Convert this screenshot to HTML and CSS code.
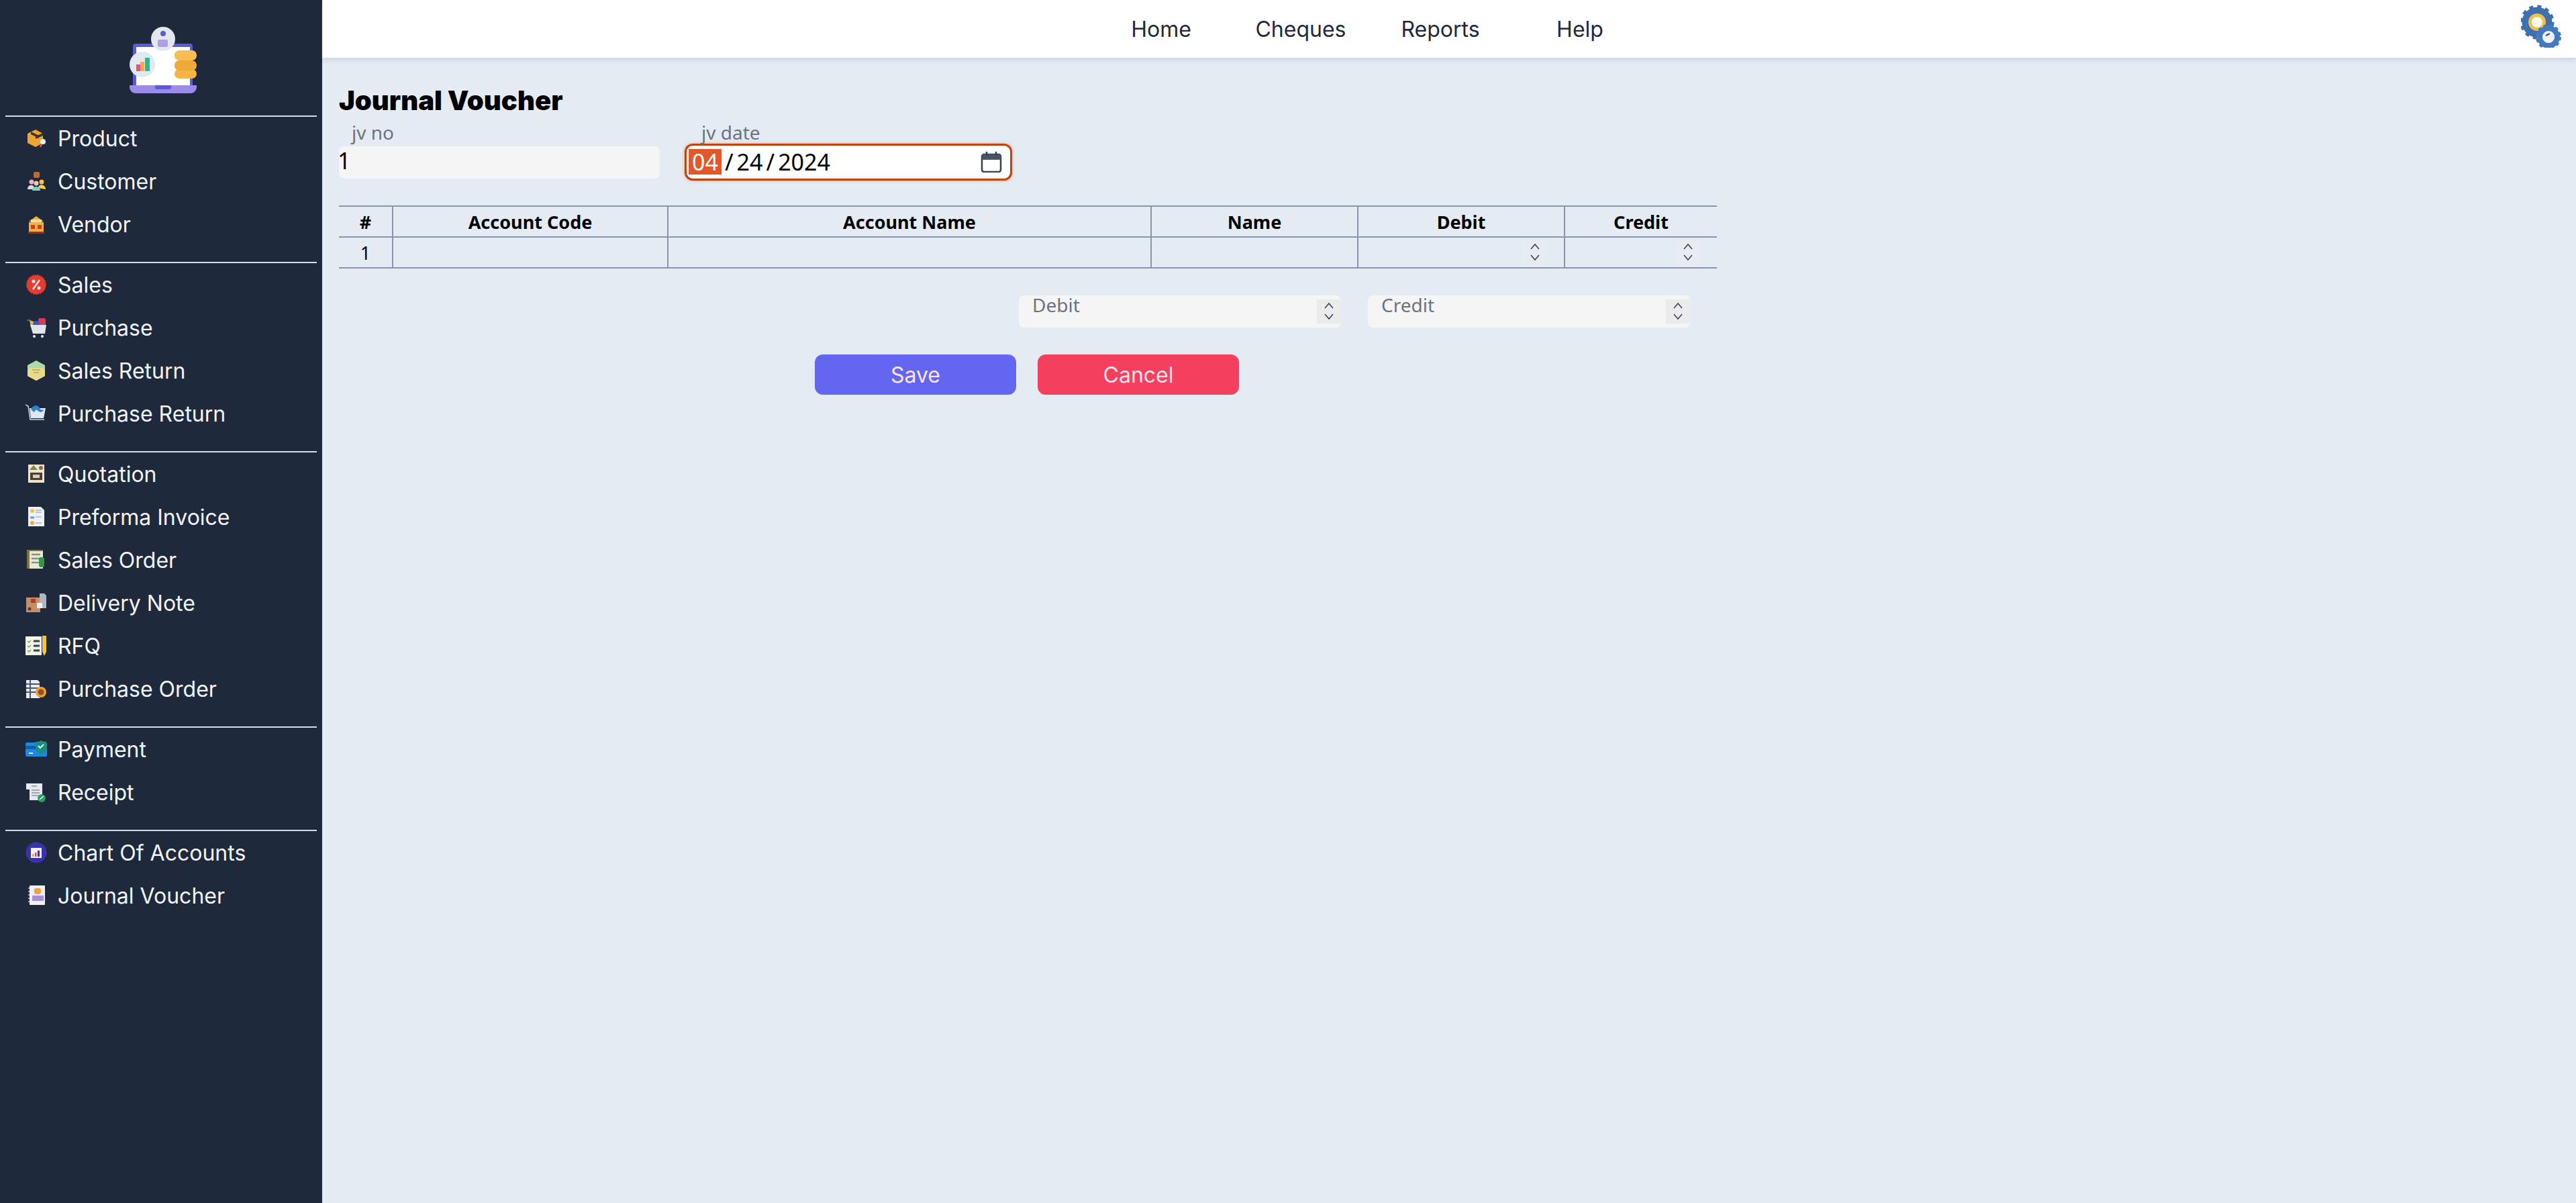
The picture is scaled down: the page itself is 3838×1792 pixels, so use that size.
FILE: index.html
```html
<!DOCTYPE html>
<html lang="en">
<head>
    <meta charset="UTF-8">
    <title>Journal Voucher</title>
    <link rel="stylesheet" href="styles.css">
</head>
<body>
    <aside class="sidebar">
        <div class="logo">
            <svg width="110" height="110" viewBox="190 35 110 110">
                <rect x="199" y="65" width="89" height="66" rx="4" fill="#5b5bd6"/>
                <rect x="204" y="70" width="80" height="58" fill="#fff"/>
                <path d="M194 127h100v3a9 9 0 0 1-9 9h-82a9 9 0 0 1-9-9z" fill="#9b8cec"/>
                <path d="M232 127h24v3a3 3 0 0 1-3 3h-18a3 3 0 0 1-3-3z" fill="#5b5bd6"/>
                <circle cx="244" cy="58" r="18" fill="#e2e8f0"/>
                <circle cx="244" cy="50" r="4" fill="#5b5bd6"/>
                <rect x="236" y="59" width="15" height="11" rx="2" fill="#ae9fe8"/>
                <circle cx="213" cy="96" r="19" fill="#e2e8f0"/>
                <rect x="204" y="96" width="6" height="10" fill="#ec4d84"/>
                <rect x="210" y="92" width="6" height="14" fill="#f6a94a"/>
                <rect x="217" y="86" width="7" height="20" fill="#2fb494"/>
                <rect x="261" y="103" width="33" height="14" rx="7" fill="#f5b544"/>
                <rect x="261" y="90" width="33" height="15" rx="7" fill="#efa93a"/>
                <rect x="261" y="75" width="33" height="15" rx="7" fill="#f8bd50"/>
            </svg>
        </div>

        <nav class="nav-group">
            <a class="nav-item" href="#">
                <svg class="ico" viewBox="0 0 32 32"><path d="M3 9l12-6 11 6v14l-11 6-12-6z" fill="#eda431"/><path d="M8 6l12 6v4l-12-6z M15 13l11-5v4l-11 5z" fill="#3b3436"/><circle cx="26" cy="21" r="4" fill="#e9eef5"/><path d="M24 25l-2 4" stroke="#e85fa0" stroke-width="2"/></svg>
                <span>Product</span>
            </a>
            <a class="nav-item" href="#">
                <svg class="ico" viewBox="0 0 32 32"><rect x="12" y="2" width="9" height="9" rx="2" fill="#b56d3f"/><circle cx="9" cy="17" r="3.5" fill="#f2b6b0"/><circle cx="24" cy="17" r="3.5" fill="#f2c14e"/><circle cx="16" cy="19" r="3.5" fill="#f6c6b4"/><path d="M3 28c0-8 10-8 10-2v2z" fill="#d5dcf2"/><path d="M19 26c0-7 11-6 11 2z" fill="#f5d04e"/><path d="M10 30c0-8 12-8 12 0z" fill="#7fd2b2"/></svg>
                <span>Customer</span>
            </a>
            <a class="nav-item" href="#">
                <svg class="ico" viewBox="0 0 32 32"><path d="M5 12L16 4l11 8z" fill="#f3ae46"/><rect x="8" y="9" width="16" height="4" fill="#f8d9a8"/><rect x="5" y="13" width="22" height="15" fill="#f5b03f"/><rect x="8" y="17" width="6" height="6" fill="#c9412b"/><rect x="18" y="17" width="6" height="6" fill="#c9412b"/><rect x="4" y="27" width="24" height="3" fill="#a52a23"/></svg>
                <span>Vendor</span>
            </a>
        </nav>

        <nav class="nav-group">
            <a class="nav-item" href="#">
                <svg class="ico" viewBox="0 0 32 32"><circle cx="16" cy="16" r="14" fill="#e53b30" stroke="#e53b30" stroke-width="2" stroke-dasharray="2 1.5"/><circle cx="12" cy="11" r="2.5" fill="#fdeaea"/><circle cx="20" cy="21" r="2.5" fill="#fdeaea"/><path d="M21 9L11 23" stroke="#fdeaea" stroke-width="2.5"/></svg>
                <span>Sales</span>
            </a>
            <a class="nav-item" href="#">
                <svg class="ico" viewBox="0 0 32 32"><path d="M2 5h6" stroke="#64748b" stroke-width="1.5"/><path d="M6 5l9 3v7H8z" fill="#f4b23f"/><rect x="19" y="2" width="11" height="12" rx="2" fill="#d93a56"/><circle cx="16" cy="11" r="5" fill="#3a55c8"/><path d="M7 12h24l-2 13H11z" fill="#dfe4ee"/><circle cx="13" cy="29" r="2" fill="#e8edf5"/><circle cx="25" cy="29" r="2" fill="#e8edf5"/></svg>
                <span>Purchase</span>
            </a>
            <a class="nav-item" href="#">
                <svg class="ico" viewBox="0 0 32 32"><path d="M16 1l13 7v16l-13 7-13-7V8z" fill="#a8dcae"/><path d="M7 12h18l4 4v8l-13 7-13-7v-8z" fill="#eadb8b"/><path d="M10 15h12M12 19h8" stroke="#b7a755" stroke-width="1.5"/></svg>
                <span>Sales Return</span>
            </a>
            <a class="nav-item" href="#">
                <svg class="ico" viewBox="0 0 32 32"><path d="M0 3l4 2 3 20h21" fill="none" stroke="#cbd5e1" stroke-width="1.5"/><path d="M6 8h24l-3 15H8z" fill="#dbeaf5"/><path d="M8 10c3-8 12-8 14 0l6 1-5 3c-5-1-8-6-8-3l-2 3z" fill="#2f7fd6"/></svg>
                <span>Purchase Return</span>
            </a>
        </nav>

        <nav class="nav-group">
            <a class="nav-item" href="#">
                <svg class="ico" viewBox="0 0 32 32"><rect x="4" y="2" width="24" height="27" fill="#f1e4cd"/><path d="M6 10l6-7 6 7z" fill="#7a8a3c"/><circle cx="23" cy="7" r="3" fill="#8a6a4a"/><rect x="7" y="14" width="18" height="11" fill="#4a4038"/><rect x="11" y="17" width="10" height="5" fill="#d9cdb8"/></svg>
                <span>Quotation</span>
            </a>
            <a class="nav-item" href="#">
                <svg class="ico" viewBox="0 0 32 32"><path d="M4 1h19l5 5v24H4z" fill="#eef2f7"/><circle cx="10" cy="7" r="3" fill="#f2c14e"/><path d="M15 6h9M15 9h9M15 16h9M15 25h9" stroke="#a9b4c4" stroke-width="1.5"/><path d="M7 17h6" stroke="#5a9be0" stroke-width="3"/><circle cx="10" cy="25" r="3" fill="#f0a94a"/></svg>
                <span>Preforma Invoice</span>
            </a>
            <a class="nav-item" href="#">
                <svg class="ico" viewBox="0 0 32 32"><rect x="2" y="1" width="24" height="28" fill="#7c7a32"/><rect x="6" y="3" width="20" height="26" fill="#e9e8d8"/><path d="M9 8h13M9 14h13M9 20h13" stroke="#8f8f80" stroke-width="2.5"/><rect x="20" y="12" width="8" height="15" rx="3" fill="#2f9a3f"/></svg>
                <span>Sales Order</span>
            </a>
            <a class="nav-item" href="#">
                <svg class="ico" viewBox="0 0 32 32"><rect x="1" y="8" width="21" height="22" fill="#c98d62"/><rect x="8" y="10" width="7" height="6" fill="#a8402f"/><circle cx="6" cy="25" r="2.5" fill="#5a3a28"/><path d="M21 2h7l3 3v19h-10z" fill="#aeb6c2"/><path d="M17 16h8v8h-8z" fill="#eef1f5"/></svg>
                <span>Delivery Note</span>
            </a>
            <a class="nav-item" href="#">
                <svg class="ico" viewBox="0 0 32 32"><rect x="0" y="2" width="24" height="28" fill="#f2f4e8"/><path d="M3 9l2 2 3-3M3 16l2 2 3-3M3 23l2 2 3-3" fill="none" stroke="#6fb24a" stroke-width="1.5"/><path d="M12 9h9M12 16h9M12 23h9" stroke="#3a3f4a" stroke-width="3"/><path d="M25 1h6v24l-3 6-3-6z" fill="#f4c63d"/></svg>
                <span>RFQ</span>
            </a>
            <a class="nav-item" href="#">
                <svg class="ico" viewBox="0 0 32 32"><path d="M1 3h17l3 3v24H1z" fill="#e9edf2"/><path d="M1 9h20M1 15h20M1 21h20M7 3v27" stroke="#4a5568" stroke-width="2"/><circle cx="23" cy="21" r="8" fill="#e8a23a"/><circle cx="23" cy="21" r="4.5" fill="#9a4f23"/></svg>
                <span>Purchase Order</span>
            </a>
        </nav>

        <nav class="nav-group">
            <a class="nav-item" href="#">
                <svg class="ico" viewBox="0 0 32 32"><rect x="0" y="6" width="32" height="21" rx="2" fill="#1e88e5"/><rect x="0" y="11" width="20" height="5" fill="#155e9f"/><rect x="5" y="21" width="6" height="2" fill="#e3f2fd"/><path d="M15 5c4 0 7-1 8-2 2 1 5 2 8 2v8c0 6-4 9-8 11-4-2-8-5-8-11z" fill="#17907f"/><path d="M19 11l3 3 5-5" fill="none" stroke="#e6f7f4" stroke-width="2"/></svg>
                <span>Payment</span>
            </a>
            <a class="nav-item" href="#">
                <svg class="ico" viewBox="0 0 32 32"><path d="M1 3h24v22l-4 3H6v-16H1z" fill="#e6eaf0"/><path d="M9 7h8M9 13h12M9 17h12M9 21h10" stroke="#8a94a4" stroke-width="1.5"/><circle cx="24" cy="25" r="6" fill="#2e9a66"/><path d="M21 27l6-5" stroke="#e6f7ee" stroke-width="1.5"/></svg>
                <span>Receipt</span>
            </a>
        </nav>

        <nav class="nav-group">
            <a class="nav-item" href="#">
                <svg class="ico" viewBox="0 0 32 32"><circle cx="16" cy="16" r="15.5" fill="#3a32a8"/><rect x="8" y="9" width="16" height="15" fill="#f1f3f8"/><rect x="10" y="18" width="2.5" height="4" fill="#e9a23b"/><rect x="14" y="16" width="2.5" height="6" fill="#d9436a"/><rect x="18" y="13" width="3" height="9" fill="#3a32a8"/></svg>
                <span>Chart Of Accounts</span>
            </a>
            <a class="nav-item" href="#">
                <svg class="ico" viewBox="0 0 32 32"><rect x="6" y="1" width="23" height="29" rx="1" fill="#eef0f4"/><path d="M6 5h-2M6 10h-2M6 15h-2M6 20h-2M6 25h-2" stroke="#9aa3b2" stroke-width="2"/><rect x="13" y="5" width="10" height="9" rx="3" fill="#f0a23c"/><rect x="10" y="16" width="17" height="8" fill="#a78fd8"/></svg>
                <span>Journal Voucher</span>
            </a>
        </nav>
    </aside>

    <div class="page">
        <header class="topbar">
            <ul class="top-links">
                <li><a href="#">Home</a></li>
                <li><a href="#">Cheques</a></li>
                <li><a href="#">Reports</a></li>
                <li><a href="#">Help</a></li>
            </ul>
            <svg class="gear" width="64" height="64" viewBox="0 0 64 64">
                <circle cx="24" cy="26" r="17" fill="none" stroke="#3e6fae" stroke-width="11"/>
                <circle cx="24" cy="26" r="23" fill="none" stroke="#3e6fae" stroke-width="5" stroke-dasharray="6 6"/>
                <circle cx="24" cy="26" r="13" fill="#eec04f"/>
                <circle cx="24" cy="26" r="8" fill="#fffbe8"/>
                <circle cx="41" cy="48" r="13" fill="none" stroke="#4479bb" stroke-width="8"/>
                <circle cx="41" cy="48" r="17" fill="none" stroke="#4479bb" stroke-width="4" stroke-dasharray="5 4"/>
                <circle cx="41" cy="48" r="9" fill="#eef2f8"/>
                <path d="M37 46l6-3" stroke="#2f5688" stroke-width="2.5"/>
            </svg>
        </header>

        <main class="content">
            <h1 class="title">Journal Voucher</h1>

            <form class="voucher-form" onsubmit="return false;">
                <div class="top-fields">
                    <div class="field">
                        <label class="field-label">jv no</label>
                        <div class="text-box">1</div>
                    </div>
                    <div class="field field-date">
                        <label class="field-label">jv date</label>
                        <div class="date-box">
                            <span class="date-part selected">04</span>
                            <span class="date-sep">/</span>
                            <span class="date-part">24</span>
                            <span class="date-sep">/</span>
                            <span class="date-part">2024</span>
                            <svg class="calendar" width="32" height="32" viewBox="0 0 32 32">
                                <rect x="2" y="5" width="28" height="26" rx="3" fill="#fff" stroke="#374151" stroke-width="2.5"/>
                                <path d="M2 8a3 3 0 0 1 3-3h22a3 3 0 0 1 3 3v5H2z" fill="#4b5563"/>
                                <path d="M9 1v6M23 1v6" stroke="#374151" stroke-width="2.5"/>
                            </svg>
                        </div>
                    </div>
                </div>

                <table class="lines">
                    <colgroup>
                        <col class="col-no"><col class="col-code"><col class="col-account">
                        <col class="col-name"><col class="col-debit"><col class="col-credit">
                    </colgroup>
                    <thead>
                        <tr><th>#</th><th>Account Code</th><th>Account Name</th><th>Name</th><th>Debit</th><th>Credit</th></tr>
                    </thead>
                    <tbody>
                        <tr>
                            <td>1</td><td></td><td></td><td></td>
                            <td class="num-cell">
                                <span class="spin"><svg width="16" height="30" viewBox="0 0 16 30"><path d="M2 10l6-7 6 7M2 19l6 7 6-7" fill="none" stroke="#374151" stroke-width="1.5"/></svg></span>
                            </td>
                            <td class="num-cell">
                                <span class="spin"><svg width="16" height="30" viewBox="0 0 16 30"><path d="M2 10l6-7 6 7M2 19l6 7 6-7" fill="none" stroke="#374151" stroke-width="1.5"/></svg></span>
                            </td>
                        </tr>
                    </tbody>
                </table>

                <div class="totals">
                    <div class="total-box">
                        <span class="placeholder">Debit</span>
                        <span class="spin"><svg width="16" height="30" viewBox="0 0 16 30"><path d="M2 10l6-7 6 7M2 19l6 7 6-7" fill="none" stroke="#374151" stroke-width="1.5"/></svg></span>
                    </div>
                    <div class="total-box">
                        <span class="placeholder">Credit</span>
                        <span class="spin"><svg width="16" height="30" viewBox="0 0 16 30"><path d="M2 10l6-7 6 7M2 19l6 7 6-7" fill="none" stroke="#374151" stroke-width="1.5"/></svg></span>
                    </div>
                </div>

                <div class="actions">
                    <button class="btn btn-save" type="submit">Save</button>
                    <button class="btn btn-cancel" type="button">Cancel</button>
                </div>
            </form>
        </main>
    </div>
</body>
</html>
```

FILE: styles.css
```css
* {
    box-sizing: border-box;
}

body {
    margin: 0;
    height: 1792px;
    display: flex;
    overflow: hidden;
    font-family: Inter, sans-serif;
    background-color: #e5ebf3;
}

/* sidebar */
.sidebar {
    width: 480px;
    flex-shrink: 0;
    padding: 0 8px;
    background-color: #1e293b;
}

.logo {
    height: 172px;
    padding: 35px 0 0 8px;
    display: flex;
    justify-content: center;
    align-items: flex-start;
}

.nav-group {
    border-top: 2px solid #cfe0f2;
    padding-bottom: 24px;
}

.nav-item {
    height: 64px;
    padding-left: 30px;
    display: flex;
    align-items: center;
    gap: 16px;
    color: #f1f5f9;
    font-size: 32px;
    text-decoration: none;
}

.ico {
    width: 32px;
    height: 32px;
    flex-shrink: 0;
}

/* top bar */
.page {
    flex: 1;
    display: flex;
    flex-direction: column;
}

.topbar {
    height: 86px;
    flex-shrink: 0;
    display: flex;
    align-items: center;
    justify-content: space-between;
    padding-left: 1146px;
    padding-right: 18px;
    background-color: white;
    box-shadow: 0 4px 6px rgba(100, 116, 139, 0.18);
}

.top-links {
    list-style: none;
    margin: 0;
    padding: 0;
    display: flex;
}

.top-links li {
    width: 208px;
    text-align: center;
}

.top-links a {
    color: #1e293b;
    font-size: 32px;
    text-decoration: none;
}

.gear {
    margin-top: -8px;
}

/* form */
.content {
    padding: 40px 0 0 25px;
    font-family: "Noto Sans", sans-serif;
}

.title {
    margin: 0;
    height: 48px;
    color: black;
    font-family: Inter, sans-serif;
    font-size: 40px;
    font-weight: 900;
    line-height: 48px;
}

.top-fields {
    margin-top: 8px;
    display: flex;
    gap: 37px;
}

.field {
    width: 478px;
}

.field-date {
    width: 488px;
}

.field-label {
    display: block;
    height: 32px;
    padding-left: 19px;
    color: #6b7280;
    font-size: 28px;
    line-height: 30px;
}

.field-date .field-label {
    padding-left: 25px;
}

.text-box {
    height: 48px;
    margin-top: 4px;
    background-color: #f5f5f5;
    border-radius: 8px;
    color: black;
    font-size: 34px;
    line-height: 42px;
    text-indent: -2px;
}

.date-box {
    height: 55px;
    padding: 0 12px 2px 3px;
    display: flex;
    align-items: center;
    gap: 5px;
    background-color: white;
    border: 3px solid #c2410c;
    border-radius: 12px;
    box-shadow: 0 0 4px rgba(234, 88, 12, 0.5);
    color: black;
    font-size: 34px;
}

.date-part.selected {
    padding: 0 5px;
    height: 38px;
    line-height: 38px;
    background-color: #e4572a;
    color: white;
}

.calendar {
    margin-left: auto;
}

.lines {
    margin-top: 37px;
    width: 2053px;
    table-layout: fixed;
    border-collapse: collapse;
    color: black;
    font-size: 27px;
}

.col-no { width: 80px; }
.col-code { width: 410px; }
.col-account { width: 720px; }
.col-name { width: 308px; }
.col-debit { width: 308px; }
.col-credit { width: 227px; }

.lines th,
.lines td {
    height: 46px;
    padding: 0;
    text-align: center;
    border: 2px solid #8896a9;
    line-height: 1;
}

.lines th:first-child,
.lines td:first-child {
    border-left: none;
}

.lines th:last-child,
.lines td:last-child {
    border-right: none;
}

.lines td.num-cell {
    padding-right: 25px;
    text-align: right;
}

.spin {
    width: 36px;
    height: 36px;
    display: inline-flex;
    align-items: center;
    justify-content: center;
    vertical-align: middle;
    background-color: #e8ebf1;
}

.totals {
    margin: 40px 0 0 1013px;
    display: flex;
    gap: 40px;
}

.total-box {
    width: 480px;
    height: 48px;
    padding: 6px 0 0 20px;
    display: flex;
    justify-content: space-between;
    background-color: #f5f5f5;
    border-radius: 8px;
}

.placeholder {
    margin-top: -5px;
    color: #6b7280;
    font-size: 28px;
    line-height: 26px;
}

.total-box .spin {
    background-color: #ebebeb;
}

.actions {
    margin: 40px 0 0 709px;
    display: flex;
    gap: 32px;
}

.btn {
    width: 300px;
    height: 60px;
    padding: 0;
    border: none;
    border-radius: 12px;
    color: #fbe4ec;
    font-family: Inter, sans-serif;
    font-size: 32px;
    cursor: pointer;
}

.btn-save {
    background-color: #6366f1;
}

.btn-cancel {
    background-color: #f43f5e;
}
```
